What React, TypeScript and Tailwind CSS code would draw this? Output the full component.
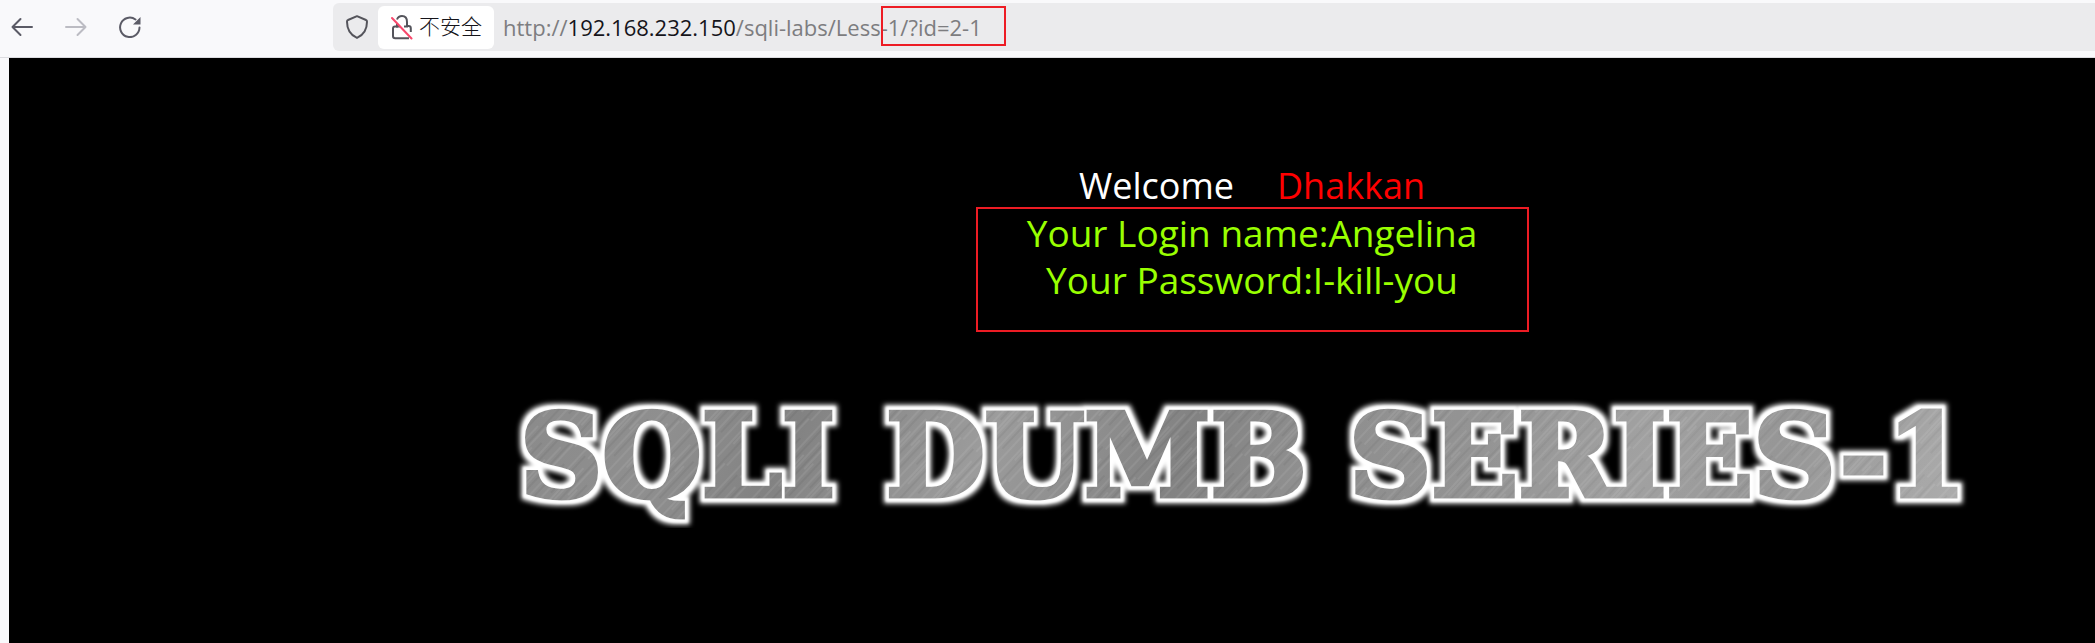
import React from "react";

function BackIcon() {
  return (
    <svg width="22" height="20" viewBox="0 0 22 20" fill="none" stroke="currentColor" strokeWidth="2" strokeLinecap="round" strokeLinejoin="round" aria-hidden="true">
      <path d="M21 10H1.5M9.5 2 1.5 10l8 8" />
    </svg>
  );
}

function ForwardIcon() {
  return (
    <svg width="22" height="20" viewBox="0 0 22 20" fill="none" stroke="currentColor" strokeWidth="2" strokeLinecap="round" strokeLinejoin="round" aria-hidden="true">
      <path d="M1 10h19.5M12.5 2l8 8-8 8" />
    </svg>
  );
}

function ReloadIcon() {
  return (
    <svg width="22" height="22" viewBox="0 0 22 22" fill="none" stroke="currentColor" strokeWidth="2" strokeLinecap="round" aria-hidden="true">
      <path d="M20.5 11.5A9.7 9.7 0 1 1 16.5 3.5" />
      <path d="M21.5 1v7.5H14z" fill="currentColor" stroke="none" />
    </svg>
  );
}

function ShieldIcon() {
  return (
    <svg width="22" height="24" viewBox="0 0 22 24" fill="none" stroke="#54545b" strokeWidth="2" strokeLinejoin="round" aria-hidden="true">
      <path d="M11 1.2 20 5c.8.3 1 .9 1 1.7 0 7-3 13-10 16.2C4 19.700 1 13.700 1 6.700 1 5.900 1.200 5.300 2 5z" />
    </svg>
  );
}

function BrokenLockIcon() {
  return (
    <svg width="22" height="26" viewBox="0 0 22 26" fill="none" strokeWidth="2" aria-hidden="true">
      <g stroke="#54545b">
        <path d="M6 5.500C7 3 8.500 2 11 2c3.500 0 5 2.500 5 6v4h1.500c1.500 0 2.300.9 2.300 2.300V18" />
        <path d="M6 9.500v3H4c-1.300 0-2 .8-2 2V22c0 1.400.8 2.200 2.200 2.200H18" />
        <path d="M5 12.500h4M13 12.500h4" />
      </g>
      <path d="M1 4 20.500 24.500" stroke="#f8486c" strokeLinecap="round" />
    </svg>
  );
}

function Banner() {
  return (
    <svg viewBox="0 0 1480 140" className="w-full max-w-[1480px]" role="img" aria-label="SQLI DUMB SERIES-1">
      <defs>
        <linearGradient id="sheen" x1="0" y1="0" x2="420" y2="180" gradientUnits="userSpaceOnUse" spreadMethod="reflect">
          <stop offset="0" stopColor="#8a8a8a" />
          <stop offset="0.35" stopColor="#8f8f8f" />
          <stop offset="0.6" stopColor="#828282" />
          <stop offset="1" stopColor="#9c9c9c" />
        </linearGradient>
        <linearGradient id="brightening" x1="0" x2="1">
          <stop offset="0.55" stopColor="#ffffff" stopOpacity="0" />
          <stop offset="0.75" stopColor="#ffffff" stopOpacity="0.16" />
        </linearGradient>
        <pattern id="scratches" width="31" height="90" patternUnits="userSpaceOnUse" patternTransform="rotate(43)">
          <path d="M3 0v90M14 10v60M24 30v60" stroke="#ffffff" strokeOpacity="0.14" />
          <path d="M7 0v50M18 0v90M28 20v50" stroke="#000000" strokeOpacity="0.1" />
          <path d="M11 30v60M21 0v40" stroke="#ffffff" strokeOpacity="0.08" strokeWidth="2" />
        </pattern>
        <pattern id="brushed" width="1480" height="140" patternUnits="userSpaceOnUse">
          <rect width="1480" height="140" fill="url(#sheen)" />
          <rect width="1480" height="140" fill="url(#scratches)" />
          <rect width="1480" height="140" fill="url(#brightening)" />
        </pattern>
        <filter id="glow" x="0" y="0" width="1480" height="140" filterUnits="userSpaceOnUse">
          <feMorphology in="SourceAlpha" operator="dilate" radius="5" result="wide" />
          <feGaussianBlur in="wide" stdDeviation="2.5" result="soft" />
          <feMorphology in="SourceAlpha" operator="dilate" radius="3" result="narrow" />
          <feGaussianBlur in="narrow" stdDeviation="1" result="rim" />
          <feFlood floodColor="#ffffff" result="white" />
          <feComposite in="white" in2="soft" operator="in" result="halo" />
          <feComposite in="white" in2="rim" operator="in" result="edge" />
          <feMerge>
            <feMergeNode in="halo" />
            <feMergeNode in="edge" />
            <feMergeNode in="SourceGraphic" />
          </feMerge>
        </filter>
      </defs>
      <g
        filter="url(#glow)"
        fill="url(#brushed)"
        stroke="url(#brushed)"
        strokeWidth="5"
        fontFamily="'DejaVu Serif', serif"
        fontWeight="700"
        fontSize="114"
      >
        <text x="8" y="108">SQLI</text>
        <text x="374" y="108">DUMB</text>
        <text x="837" y="108">SERIES-1</text>
      </g>
    </svg>
  );
}

export default function App() {
  return (
    <div className="flex min-h-screen flex-col bg-[#f9f9fb] font-['Open_Sans','Noto_Sans_CJK_SC',sans-serif]">
      <header className="flex h-[58px] items-start border-b border-[#dcdce0] pt-[3px]">
        <nav className="flex h-12 w-[333px] shrink-0 items-center gap-8 pl-[11px] text-[#5b5b66]" aria-label="Navigation">
          <button type="button" aria-label="Back"><BackIcon /></button>
          <button type="button" aria-label="Forward" className="text-[#bcbcc3]" disabled><ForwardIcon /></button>
          <button type="button" aria-label="Reload"><ReloadIcon /></button>
        </nav>
        <div className="flex h-12 flex-1 items-center rounded-l-md bg-[#ebebed] pl-[13px]">
          <button type="button" aria-label="Tracking protection"><ShieldIcon /></button>
          <button type="button" className="ml-[10px] flex h-[43px] items-center gap-[6px] rounded-md bg-white pr-3 pl-[13px] text-[21px] font-light text-[#15141a]">
            <BrokenLockIcon />
            <span>不安全</span>
          </button>
          <a href="#page" className="relative ml-[9px] text-[22px] whitespace-nowrap text-[#7d7d80]">
            http://<span className="text-[#15141a]">192.168.232.150</span>/sqli-labs/Less-1/?id=2-1
            <span className="absolute -top-[5px] -right-6 h-10 w-[125px] border-2 border-[#ed1c24]" />
          </a>
        </div>
      </header>
      <main id="page" className="ml-[9px] flex flex-1 flex-col items-center bg-black pt-[106px] pl-[400px]">
        <p className="flex h-[43px] items-center gap-[43px] text-[36px] leading-[47px]">
          <span className="text-white">Welcome</span>
          <span className="text-[#ff0000]">Dhakkan</span>
        </p>
        <section className="h-[125px] w-[553px] border-2 border-[#ed1c24] text-center text-[37px] leading-[47px] text-[#99ff00]">
          <p>Your Login name:Angelina</p>
          <p>Your Password:I-kill-you</p>
        </section>
        <div className="mt-[56px] flex w-full justify-center">
          <Banner />
        </div>
      </main>
    </div>
  );
}
